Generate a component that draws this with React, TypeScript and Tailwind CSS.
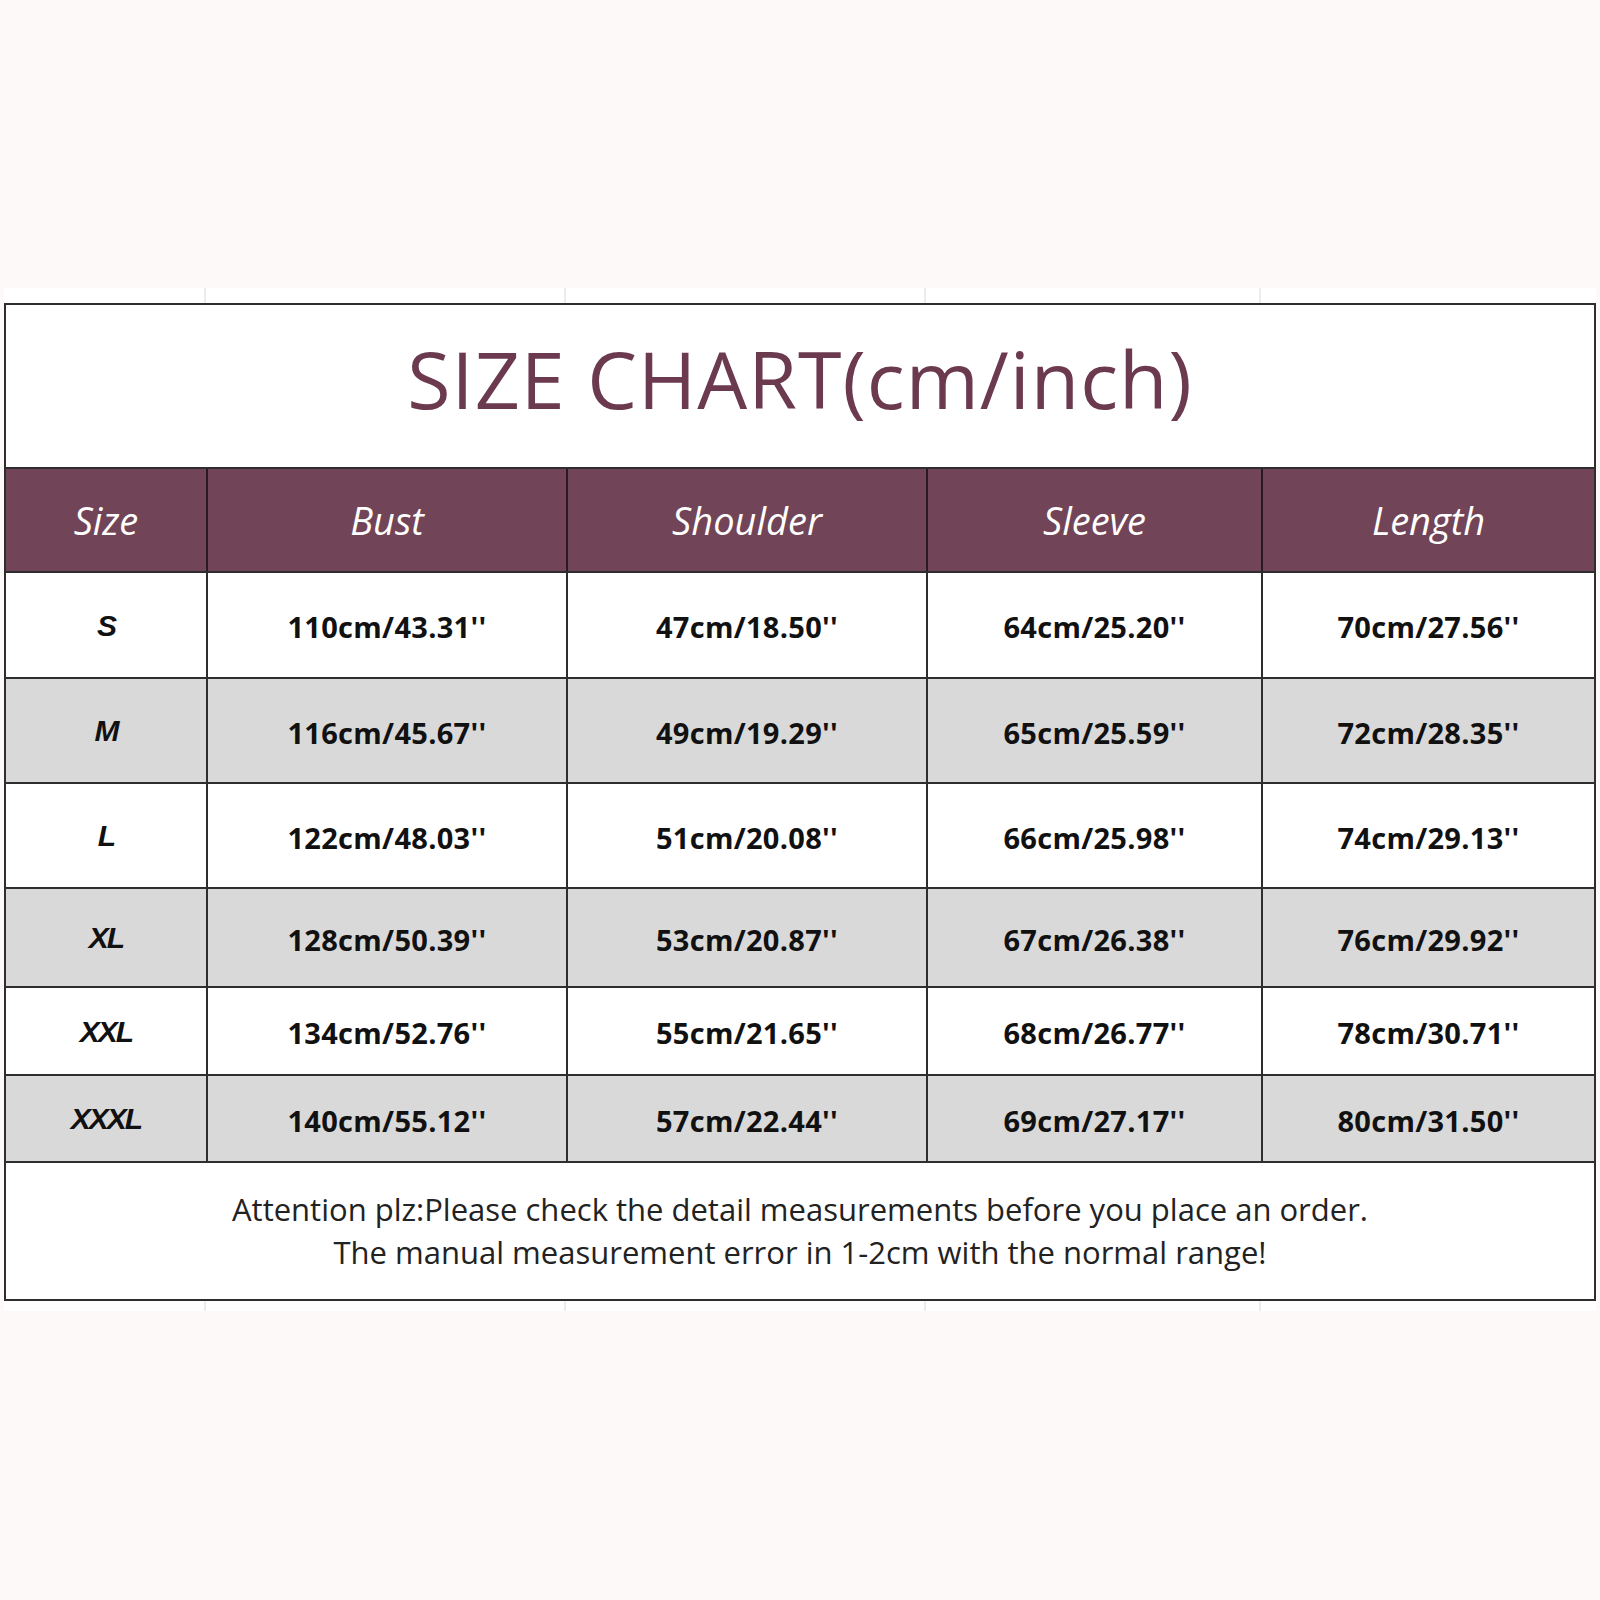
const rows = [
  { size: "S", bust: "110cm/43.31''", shoulder: "47cm/18.50''", sleeve: "64cm/25.20''", length: "70cm/27.56''", h: "h-[106px]", gray: false },
  { size: "M", bust: "116cm/45.67''", shoulder: "49cm/19.29''", sleeve: "65cm/25.59''", length: "72cm/28.35''", h: "h-[105px]", gray: true },
  { size: "L", bust: "122cm/48.03''", shoulder: "51cm/20.08''", sleeve: "66cm/25.98''", length: "74cm/29.13''", h: "h-[105px]", gray: false },
  { size: "XL", bust: "128cm/50.39''", shoulder: "53cm/20.87''", sleeve: "67cm/26.38''", length: "76cm/29.92''", h: "h-[99px]", gray: true },
  { size: "XXL", bust: "134cm/52.76''", shoulder: "55cm/21.65''", sleeve: "68cm/26.77''", length: "78cm/30.71''", h: "h-[88px]", gray: false },
  { size: "XXXL", bust: "140cm/55.12''", shoulder: "57cm/22.44''", sleeve: "69cm/27.17''", length: "80cm/31.50''", h: "h-[87px]", gray: true },
];

const headers = ["Size", "Bust", "Shoulder", "Sleeve", "Length"];
const cols = "grid grid-cols-[202px_360px_360px_335px_1fr]";

export default function App() {
  return (
    <div className="min-h-[1600px] w-[1600px] bg-[#fdf9f9] pt-[288px]">
      {/* faint ghost strip above the table */}
      <div className={`${cols} ml-[4px] h-[15px] w-[1592px] bg-white`}>
        {headers.map((h, i) => (
          <div key={h} className={i < 4 ? "border-r-2 border-[#ececec]" : ""} />
        ))}
      </div>

      <div className="ml-[4px] w-[1592px] border-2 border-[#2e2e2e] bg-white">
        <div className="flex h-[164px] items-center justify-center border-b-2 border-[#2e2e2e] pb-[14px]">
          <span className="font-['Open_Sans',sans-serif] text-[79px] font-medium tracking-[1px] text-[#6b3a4e]">
            SIZE CHART(cm/inch)
          </span>
        </div>

        <div className={`${cols} h-[104px] border-b-2 border-[#2e2e2e] bg-[#714557]`}>
          {headers.map((h, i) => (
            <div
              key={h}
              className={`flex items-center justify-center font-['Open_Sans',sans-serif] text-[38px] italic text-white ${i < 4 ? "border-r-2 border-[#2a1a20]" : ""}`}
            >
              {h}
            </div>
          ))}
        </div>

        {rows.map((r) => (
          <div key={r.size} className={`${cols} ${r.h} border-b-2 border-[#2e2e2e] ${r.gray ? "bg-[#d9d9d9]" : "bg-white"}`}>
            <div className="flex items-center justify-center border-r-2 border-[#2e2e2e] font-['Liberation_Sans',sans-serif] text-[30px] font-bold italic tracking-[-2px] text-[#111]">
              {r.size}
            </div>
            {[r.bust, r.shoulder, r.sleeve, r.length].map((v, i) => (
              <div
                key={i}
                className={`flex items-center justify-center pt-[4px] font-['Open_Sans',sans-serif] text-[29px] font-bold tracking-[0.3px] text-[#111] ${i < 3 ? "border-r-2 border-[#2e2e2e]" : ""}`}
              >
                {v}
              </div>
            ))}
          </div>
        ))}

        <div className="flex h-[136px] flex-col items-center justify-center font-['Open_Sans',sans-serif] text-[31px] leading-[43px] text-[#222]">
          <div>Attention plz:Please check the detail measurements before you place an order.</div>
          <div>The manual measurement error in 1-2cm with the normal range!</div>
        </div>
      </div>

      <div className={`${cols} ml-[4px] h-[10px] w-[1592px] bg-white`}>
        {headers.map((h, i) => (
          <div key={h} className={i < 4 ? "border-r-2 border-[#ececec]" : ""} />
        ))}
      </div>
    </div>
  );
}
